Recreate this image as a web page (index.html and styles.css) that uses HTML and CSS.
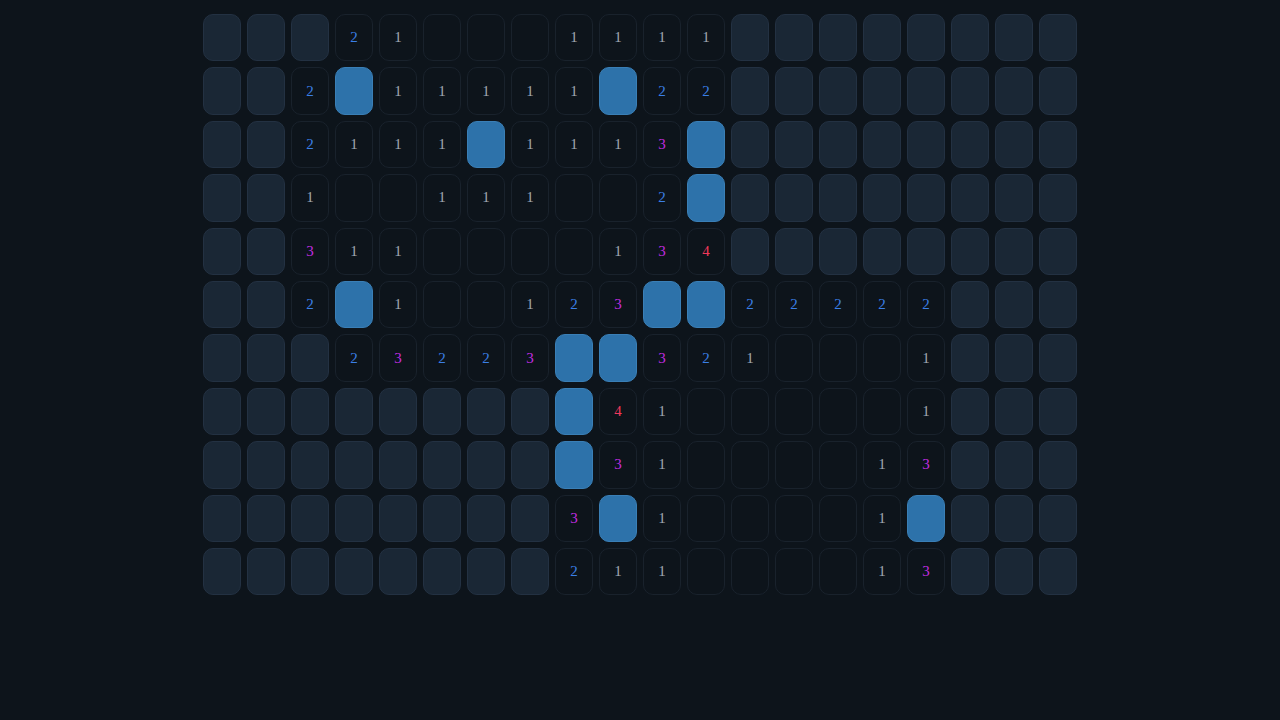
FILE: index.html
```html
<!DOCTYPE html>
<html lang="en">
<head>
  <meta charset="UTF-8" />
  <meta name="viewport" content="width=device-width, initial-scale=1.0"/>
  <title>Minesweeper</title>
  <link rel="stylesheet" href="styles.css">
</head>
<body>
  <div class="board" id="board"></div>

  <script>
    // u = hidden, f = flagged, . = open, digits = neighbour count
    const rows = [
      "uuu21...1111uuuuuuuu",
      "uu2f11111f22uuuuuuuu",
      "uu2111f1113fuuuuuuuu",
      "uu1..111..2fuuuuuuuu",
      "uu311....134uuuuuuuu",
      "uu2f1..123ff22222uuu",
      "uuu23223ff321...1uuu",
      "uuuuuuuuf41.....1uuu",
      "uuuuuuuuf31....13uuu",
      "uuuuuuuu3f1....1fuuu",
      "uuuuuuuu211....13uuu"
    ];

    const board = document.getElementById("board");
    rows.forEach(function (row) {
      for (const ch of row) {
        const cell = document.createElement("div");
        if (ch === "u") {
          cell.className = "cell hidden";
        } else if (ch === "f") {
          cell.className = "cell flag";
        } else {
          cell.className = "cell open";
          if (ch !== ".") {
            cell.classList.add("n" + ch);
            cell.textContent = ch;
          }
        }
        board.appendChild(cell);
      }
    });
  </script>
</body>
</html>
```

FILE: styles.css
```css
body {
  margin: 0;
  background: #0d141b;
  font-family: 'Liberation Serif', serif;
}
.board {
  display: grid;
  grid-template-columns: repeat(20, 38px);
  grid-auto-rows: 47.4px;
  gap: 6px;
  width: max-content;
  margin: 14px auto 0;
}
.cell {
  box-sizing: border-box;
  border-radius: 10px;
  border: 1px solid #19222c;
  display: flex;
  align-items: center;
  justify-content: center;
  font-size: 15px;
}
.hidden {
  background: #1a2735;
  border-color: #233142;
}
.flag {
  background: #2d72aa;
  border-color: #3a7fb6;
}
.open {
  background: #0d141b;
}
.n1 { color: #a0a8b2; }
.n2 { color: #3b7fe6; }
.n3 { color: #c22ce0; }
.n4 { color: #f0385c; }
```
